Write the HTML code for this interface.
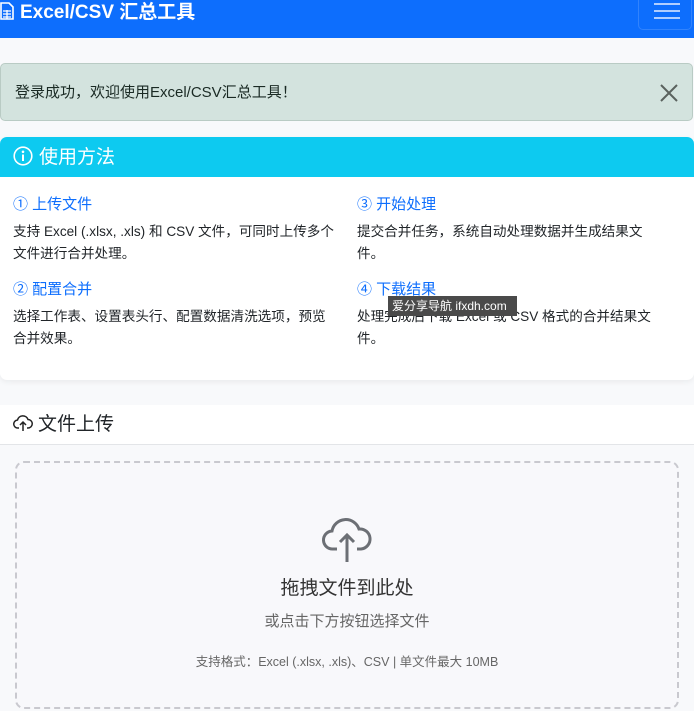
<!DOCTYPE html>
<html><head><meta charset="utf-8"><style>
*{box-sizing:border-box;margin:0;padding:0}
body{width:694px;height:711px;overflow:hidden;background:#f8f9fb;font-family:"Liberation Sans","Noto Sans CJK SC",sans-serif;position:relative;color:#212529}
.nav{position:absolute;left:0;top:0;width:694px;height:38px;background:#0d6efd}
.brand{position:absolute;left:0;top:0px;color:#fff;font-size:19px;font-weight:bold;line-height:26px}
.ham{position:absolute;left:638px;top:-6px;width:54px;height:36px;border:1px solid rgba(255,255,255,.15);border-radius:5px}
.alert{position:absolute;left:0;top:63px;width:693px;height:58px;background:#d3e3de;border:1px solid #b9cbc4;border-radius:5px;font-size:15px;line-height:58px;padding-left:14px;color:#1a2a24}
.x{position:absolute;right:14px;top:0;font-size:26px;color:#5a625e}
.card1{position:absolute;left:0;top:137px;width:694px;height:243px;background:#fff;border-radius:7px;box-shadow:0 2px 6px rgba(0,0,0,.06);overflow:hidden}
.h1{height:40px;background:#0dcaf0;color:#fff;font-size:19px;line-height:42px;padding-left:13px}
.item{position:absolute;width:322px}
.t{color:#0d6efd;font-size:15px;line-height:20px}
.d{font-size:13.6px;line-height:22px;margin-top:6px;color:#212529}
.card2h{position:absolute;left:0;top:405px;width:694px;height:40px;background:#fff;border-bottom:1px solid #e3e5e8;font-size:19px;line-height:40px;padding-left:13px}
.drop{position:absolute;left:15px;top:461px;width:664px;height:248px;border:2px dashed #c9c9cf;border-radius:9px;background:#f8f8fb;text-align:center}
.wm{position:absolute;left:388px;top:296px;width:129px;height:20px;background:#4a4a4a;color:#fff;font-size:12px;line-height:20px;padding-left:4px}
</style></head><body>
<div class="nav">
<div class="brand"><svg width="14" height="18" viewBox="0 0 14 18" style="vertical-align:-2px;margin-right:6px"><path d="M1 1h8l4 4v12H1z" fill="none" stroke="#fff" stroke-width="1.6"/><path d="M3 9h8M3 12h8M3 15h8M7 8v9" stroke="#fff" stroke-width="1.3"/></svg>Excel/CSV 汇总工具</div>
<div class="ham"><svg width="54" height="36" style="position:absolute;left:0;top:0"><path d="M15 9h26M15 16h26M15 23h26" stroke="#c8dcff" stroke-width="1.8"/></svg></div>
</div>
<div class="alert">登录成功，欢迎使用Excel/CSV汇总工具！<span class="x"><svg width="18" height="18" viewBox="0 0 18 18" style="margin-top:20px"><path d="M1 1l16 16M17 1L1 17" stroke="#5a625e" stroke-width="2"/></svg></span></div>
<div class="card1">
<div class="h1"><svg width="20" height="20" viewBox="0 0 20 20" style="vertical-align:-3px;margin-right:6px"><circle cx="10" cy="10" r="8.8" fill="none" stroke="#fff" stroke-width="1.6"/><circle cx="10" cy="5.8" r="1.3" fill="#fff"/><path d="M10 8.5v6.5" stroke="#fff" stroke-width="2"/></svg>使用方法</div>
<div class="item" style="left:13px;top:58px"><div class="t">① 上传文件</div><div class="d">支持 Excel (.xlsx, .xls) 和 CSV 文件，可同时上传多个文件进行合并处理。</div></div>
<div class="item" style="left:357px;top:58px;width:300px"><div class="t">③ 开始处理</div><div class="d">提交合并任务，系统自动处理数据并生成结果文件。</div></div>
<div class="item" style="left:13px;top:143px"><div class="t">② 配置合并</div><div class="d">选择工作表、设置表头行、配置数据清洗选项，预览合并效果。</div></div>
<div class="item" style="left:357px;top:143px;width:300px"><div class="t">④ 下载结果</div><div class="d">处理完成后下载 Excel 或 CSV 格式的合并结果文件。</div></div>
</div>
<div class="wm">爱分享导航 ifxdh.com</div>
<div class="card2h"><svg width="20" height="20" viewBox="0 0 20 20" style="vertical-align:-3px;margin-right:5px"><path d="M6 15H5a4 4 0 0 1-.5-8A5.5 5.5 0 0 1 15 6.5 4 4 0 0 1 15 15h-1" fill="none" stroke="#222" stroke-width="1.5"/><path d="M10 18V9M7 12l3-3 3 3" fill="none" stroke="#222" stroke-width="1.5"/></svg>文件上传</div>
<div class="drop">
<svg width="52" height="48" viewBox="0 0 52 48" style="position:absolute;left:304px;top:53px"><path d="M16 33h-4a9 9 0 0 1-1-18A14 14 0 0 1 38 13a10 10 0 0 1 2 20h-4" fill="none" stroke="#6c6f75" stroke-width="3"/><path d="M26 46V19M19 26l7-7 7 7" fill="none" stroke="#6c6f75" stroke-width="3"/></svg>
<div style="position:absolute;left:0;width:660px;top:110px;font-size:19px;color:#333">拖拽文件到此处</div>
<div style="position:absolute;left:0;width:660px;top:147px;font-size:15px;color:#666">或点击下方按钮选择文件</div>
<div style="position:absolute;left:0;width:660px;top:188px;font-size:12.5px;color:#666">支持格式：Excel (.xlsx, .xls)、CSV | 单文件最大 10MB</div>
</div>
</body></html>
